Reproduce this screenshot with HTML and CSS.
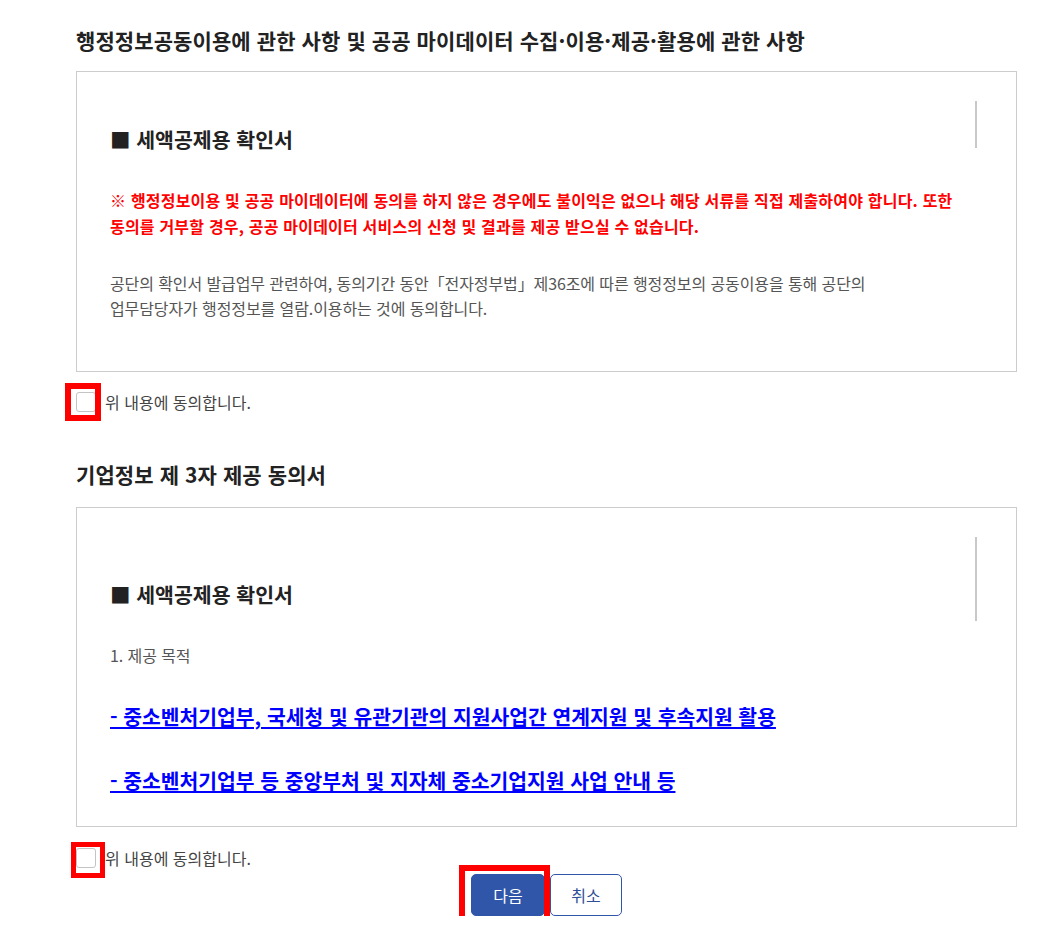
FILE: index.html
```html
<!DOCTYPE html>
<html lang="ko">
<head>
    <meta charset="UTF-8">
    <meta name="viewport" content="width=device-width, initial-scale=1.0">
    <title>동의서</title>
    <link rel="stylesheet" href="styles.css">
</head>
<body>

    <div class="wrap">

        <h2 class="section-title">행정정보공동이용에 관한 사항 및 공공 마이데이터 수집·이용·제공·활용에 관한 사항</h2>

        <div class="terms-box terms-first">
            <span class="scroll-thumb"></span>
            <h3 class="terms-head">■ 세액공제용 확인서</h3>
            <p class="warn">※ 행정정보이용 및 공공 마이데이터에 동의를 하지 않은 경우에도 불이익은 없으나 해당 서류를 직접 제출하여야 합니다. 또한<br>동의를 거부할 경우, 공공 마이데이터 서비스의 신청 및 결과를 제공 받으실 수 없습니다.</p>
            <p class="desc">공단의 확인서 발급업무 관련하여, 동의기간 동안「전자정부법」제36조에 따른 행정정보의 공동이용을 통해 공단의<br>업무담당자가 행정정보를 열람.이용하는 것에 동의합니다.</p>
        </div>

        <label class="agree agree-first">
            <span class="check-wrap">
                <input type="checkbox" class="check">
                <span class="mark mark-check1"></span>
            </span>
            위 내용에 동의합니다.
        </label>

        <h2 class="section-title second">기업정보 제 3자 제공 동의서</h2>

        <div class="terms-box terms-second">
            <span class="scroll-thumb long"></span>
            <h3 class="terms-head">■ 세액공제용 확인서</h3>
            <p class="desc item">1. 제공 목적</p>
            <p class="link-line"><a href="#">- 중소벤처기업부, 국세청 및 유관기관의 지원사업간 연계지원 및 후속지원 활용</a></p>
            <p class="link-line last"><a href="#">- 중소벤처기업부 등 중앙부처 및 지자체 중소기업지원 사업 안내 등</a></p>
        </div>

        <label class="agree agree-second">
            <span class="check-wrap">
                <input type="checkbox" class="check">
                <span class="mark mark-check2"></span>
            </span>
            위 내용에 동의합니다.
        </label>

        <div class="buttons">
            <span class="btn-wrap">
                <button class="btn btn-next">다음</button>
                <span class="mark mark-btn"></span>
            </span>
            <button class="btn btn-cancel">취소</button>
        </div>

    </div>

</body>
</html>
```

FILE: styles.css
```css
body {
    margin: 0;
    font-family: "Noto Sans CJK KR", "Noto Sans", sans-serif;
    background-color: #fff;
    color: #222;
}

.wrap {
    padding: 26px 46px 0 76px;
}

.section-title {
    margin: 0;
    font-size: 21px;
    line-height: 28px;
    font-weight: bold;
    color: #222;
    letter-spacing: 0.1px;
}

.section-title.second {
    margin-top: 48px;
}

/* terms boxes */
.terms-box {
    position: relative;
    margin-top: 17px;
    border: 1px solid #ccc;
    padding: 53px 46px 50px 33px;
}

.terms-second {
    margin-top: 19px;
    padding-top: 72px;
    padding-bottom: 32px;
}

.scroll-thumb {
    position: absolute;
    top: 29px;
    left: 898px;
    width: 2px;
    height: 47px;
    background-color: #c8c8c8;
}

.scroll-thumb.long {
    height: 84px;
}

.terms-head {
    margin: 0;
    font-size: 20.5px;
    line-height: 28px;
    font-weight: bold;
    color: #222;
}

.warn {
    margin: 34px 0 0;
    font-size: 16px;
    line-height: 26px;
    font-weight: bold;
    color: #ff0000;
    letter-spacing: 0.2px;
}

.desc {
    margin: 32px 0 0;
    font-size: 16px;
    line-height: 25px;
    color: #555;
    letter-spacing: -0.1px;
}

.desc.item {
    margin-top: 35px;
}

.link-line {
    margin: 34px 0 0;
    font-size: 20.4px;
    line-height: 28px;
    font-weight: bold;
}

.link-line.last {
    margin-top: 36px;
}

.link-line a {
    color: #0000ff;
    text-decoration: underline;
}

/* agree checkbox rows */
.agree {
    display: flex;
    align-items: center;
    gap: 9px;
    font-size: 16px;
    line-height: 20px;
    color: #444;
}

.agree-first {
    margin-top: 20px;
}

.agree-second {
    margin-top: 21px;
}

.check-wrap {
    position: relative;
    display: block;
    width: 20px;
    height: 20px;
}

.check {
    appearance: none;
    -webkit-appearance: none;
    display: block;
    margin: 0;
    width: 20px;
    height: 20px;
    border: 1px solid #c4c4c4;
    border-radius: 3px;
    background-color: #fff;
}

/* red highlight frames */
.mark {
    position: absolute;
    border: 6px solid #ff0000;
    box-sizing: border-box;
    pointer-events: none;
}

.mark-check1 {
    left: -11px;
    top: -9px;
    width: 36px;
    height: 38px;
}

.mark-check2 {
    left: -5px;
    top: -6px;
    width: 34px;
    height: 36px;
    border-width: 5px;
}

.mark-btn {
    left: -12px;
    top: -9px;
    width: 91px;
    height: 58px;
}

/* buttons */
.buttons {
    display: flex;
    justify-content: center;
    gap: 5px;
    margin-top: 6px;
}

.btn-wrap {
    position: relative;
    display: block;
}

.btn {
    display: block;
    height: 42px;
    border-radius: 5px;
    font-family: inherit;
    font-size: 16px;
    cursor: pointer;
}

.btn-next {
    width: 74px;
    border: 1px solid #3056a9;
    background-color: #3056a9;
    color: #fff;
}

.btn-cancel {
    width: 72px;
    border: 1px solid #3056a9;
    background-color: #fff;
    color: #2f4f96;
}
```
